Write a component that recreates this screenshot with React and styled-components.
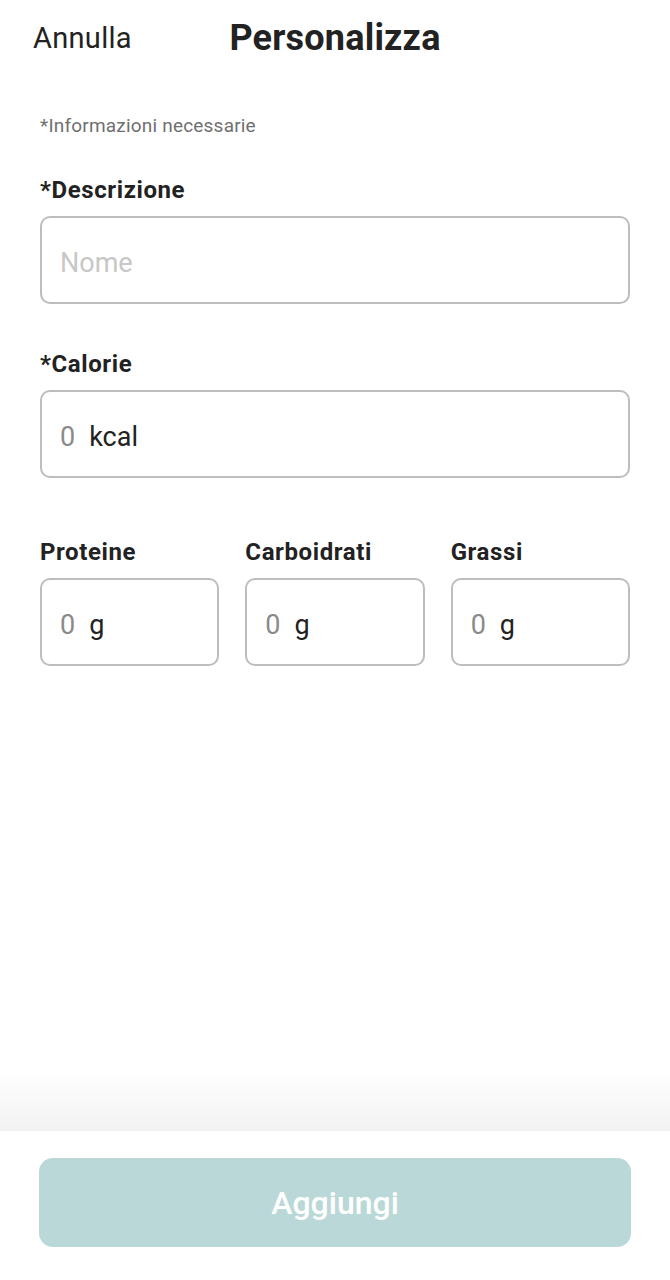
import React from 'react';
import styled, { createGlobalStyle } from 'styled-components';

const GlobalStyle = createGlobalStyle`
    * {
        box-sizing: border-box;
    }

    body {
        margin: 0;
        background: #ffffff;
        font-family: Roboto, "Noto Sans", "Liberation Sans", sans-serif;
        color: #222222;
    }
`;

export default function App() {
    return (
        <Page>
            <GlobalStyle />
            <Header>
                <Cancel>Annulla</Cancel>
                <Title>Personalizza</Title>
            </Header>
            <Content>
                <Note>*Informazioni necessarie</Note>
                <Field>
                    <Label>*Descrizione</Label>
                    <Box>
                        <Placeholder>Nome</Placeholder>
                    </Box>
                </Field>
                <Field>
                    <Label>*Calorie</Label>
                    <Box>
                        <Value>0</Value>
                        <Unit>kcal</Unit>
                    </Box>
                </Field>
                <Macros>
                    {['Proteine', 'Carboidrati', 'Grassi'].map((name) => (
                        <Field key={name}>
                            <Label>{name}</Label>
                            <Box>
                                <Value>0</Value>
                                <Unit>g</Unit>
                            </Box>
                        </Field>
                    ))}
                </Macros>
            </Content>
            <Footer>
                <Button>Aggiungi</Button>
            </Footer>
        </Page>
    );
}

const Page = styled.div`
    height: 1280px;
    display: flex;
    flex-direction: column;
    overflow: hidden;
`;

const Header = styled.div`
    height: 76px;
    display: flex;
    align-items: center;
    justify-content: center;
    position: relative;
`;

const Cancel = styled.span`
    position: absolute;
    left: 33px;
    top: 21px;
    font-size: 29px;
    font-weight: 400;
    color: #222;
    letter-spacing: 0.3px;
`;

const Title = styled.h1`
    margin: 0;
    font-size: 36px;
    font-weight: 700;
    color: #222;
    letter-spacing: 0.2px;
`;

const Content = styled.div`
    flex: 1;
    display: flex;
    flex-direction: column;
    padding: 38px 40px 0 40px;
`;

const Note = styled.p`
    margin: 0 0 39px 0;
    font-size: 19px;
    color: #6f6f6f;
    letter-spacing: 0.2px;
`;

const Field = styled.div`
    display: flex;
    flex-direction: column;
    margin-bottom: 46px;
    min-width: 0;
`;

const Label = styled.label`
    font-size: 24px;
    font-weight: 700;
    color: #222;
    margin-bottom: 12px;
    line-height: 28px;
    letter-spacing: 0.6px;
`;

const Box = styled.div`
    height: 88px;
    border: 2px solid #bdbdbd;
    border-radius: 10px;
    display: flex;
    align-items: center;
    padding: 5px 18px 0 18px;
    gap: 14px;
    font-size: 27px;
`;

const Placeholder = styled.span`
    color: #c7c7c7;
`;

const Value = styled.span`
    color: #8a8a8a;
`;

const Unit = styled.span`
    color: #222;
`;

const Macros = styled.div`
    display: grid;
    grid-template-columns: repeat(3, 1fr);
    column-gap: 26px;
    margin-top: 14px;
`;

const Footer = styled.div`
    height: 149px;
    background: #ffffff;
    padding: 27px 39px 0 39px;
    position: relative;

    &::before {
        content: '';
        position: absolute;
        left: 0;
        right: 0;
        top: -62px;
        height: 62px;
        background: linear-gradient(to bottom, rgba(0, 0, 0, 0), rgba(0, 0, 0, 0.05));
    }
`;

const Button = styled.button`
    width: 100%;
    height: 89px;
    border: none;
    border-radius: 14px;
    background: #b9d8d7;
    color: #ffffff;
    font-family: inherit;
    font-size: 32px;
    font-weight: 500;
`;
